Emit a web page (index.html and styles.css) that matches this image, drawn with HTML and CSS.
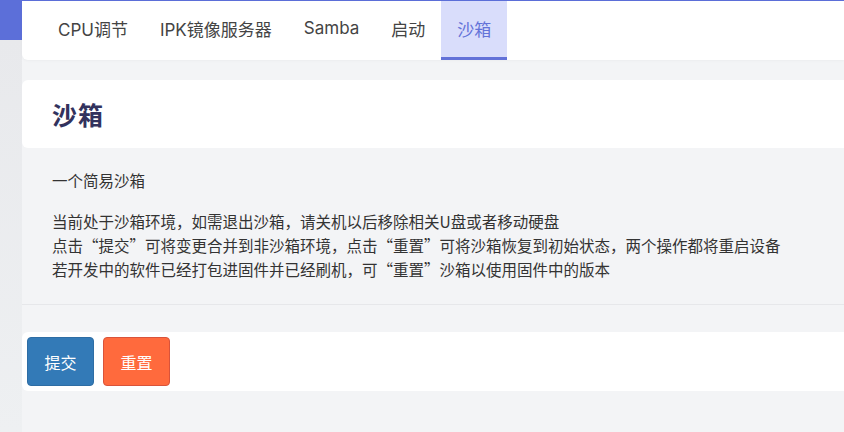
FILE: index.html
```html
<!DOCTYPE html>
<html lang="zh-CN">
<head>
<meta charset="utf-8">
<link rel="stylesheet" href="styles.css">
</head>
<body>
<div class="page">
  <div class="side"></div>
  <main class="main">
    <nav class="tabs">
      <a class="tab">CPU调节</a>
      <a class="tab">IPK镜像服务器</a>
      <a class="tab">Samba</a>
      <a class="tab">启动</a>
      <a class="tab active">沙箱</a>
    </nav>
    <header class="title-card">
      <h2 class="title">沙箱</h2>
    </header>
    <section class="desc">
      <p class="lead">一个简易沙箱</p>
      <p class="info">当前处于沙箱环境，如需退出沙箱，请关机以后移除相关U盘或者移动硬盘<br>点击“提交”可将变更合并到非沙箱环境，点击“重置”可将沙箱恢复到初始状态，两个操作都将重启设备<br>若开发中的软件已经打包进固件并已经刷机，可“重置”沙箱以使用固件中的版本</p>
    </section>
    <div class="actions">
      <button class="btn btn-submit">提交</button>
      <button class="btn btn-reset">重置</button>
    </div>
  </main>
</div>
</body>
</html>
```
FILE: styles.css
```css
* { box-sizing: border-box; }
html, body { margin: 0; padding: 0; }
body {
  background: #f3f4f6;
  font-family: "Noto Sans CJK SC", "Noto Sans", sans-serif;
  width: 844px;
  height: 432px;
  overflow: hidden;
}
.page {
  display: flex;
  min-height: 432px;
  background: linear-gradient(#5c6fd9 0, #5c6fd9 40px, #f3f4f6 40px);
}
.side {
  width: 22px;
  flex: none;
  background: linear-gradient(#5c6fd9 0, #5c6fd9 40px, #e8e9ec 40px, #eef0f2 100%);
}
.main {
  flex: 1;
  padding-top: 1px;
  display: flex;
  flex-direction: column;
}
.tabs {
  display: flex;
  height: 59px;
  background: #fff;
  border-radius: 0 0 0 6px;
  padding-left: 20px;
  box-shadow: 0 1px 3px rgba(0,0,0,0.03);
}
.tab {
  display: flex;
  align-items: center;
  padding: 0 16px 2px;
  font-family: "Inter", "Noto Sans CJK SC", sans-serif;
  font-size: 17px;
  color: #444;
  border-bottom: 3px solid transparent;
}
.tab.active {
  background: #d9ddfb;
  color: #6372d8;
  border-bottom-color: #6372d8;
}
.title-card {
  margin-top: 20px;
  height: 68px;
  background: #fff;
  border-radius: 6px 0 0 6px;
  display: flex;
  align-items: center;
  padding-left: 30px;
}
.title {
  margin: 0;
  font-size: 25px;
  font-weight: 700;
  color: #32325d;
  letter-spacing: 1px;
}
.desc {
  padding: 20px 0 23px 30px;
  border-bottom: 1px solid #e6e7ea;
  color: #333;
  font-size: 15.5px;
  line-height: 24px;
}
.desc p { margin: 0; }
.lead { margin-bottom: 17px !important; }
.actions {
  margin-top: 27px;
  height: 59px;
  background: #fff;
  border-radius: 6px 0 0 6px;
  display: flex;
  align-items: center;
  gap: 9px;
  padding-left: 5px;
}
.btn {
  height: 49px;
  width: 67px;
  border-radius: 4px;
  font-family: "Noto Sans CJK SC", sans-serif;
  font-size: 16px;
  color: #fff;
  cursor: pointer;
}
.btn-submit {
  background: #337ab7;
  border: 1px solid #2e6da4;
}
.btn-reset {
  background: #ff6a3d;
  border: 1px solid #d9533a;
}
```
